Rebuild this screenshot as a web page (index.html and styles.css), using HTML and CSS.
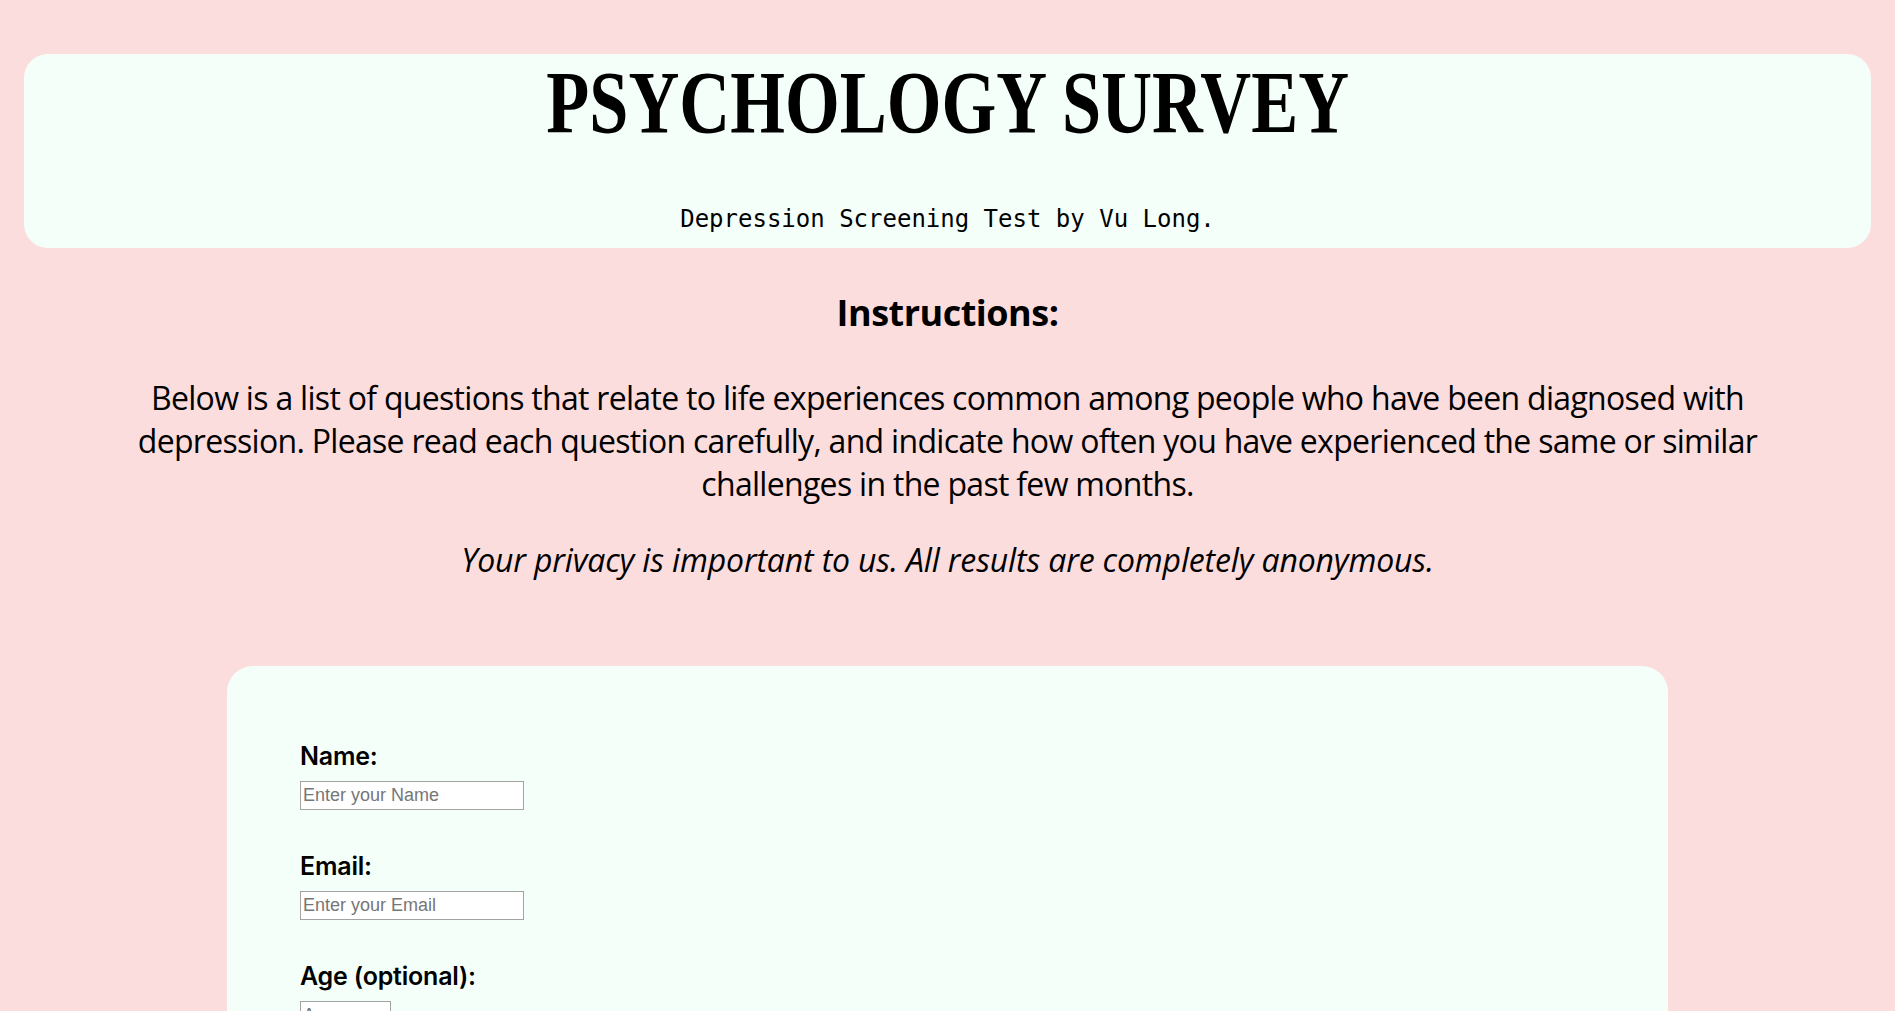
FILE: index.html
```html
<!DOCTYPE html>
<html lang="en">
<head>
<meta charset="utf-8">
<title>Psychology Survey</title>
<link rel="stylesheet" href="styles.css">
</head>
<body>
  <header class="hero">
    <h1 class="hero-title"><span class="hero-title-text">PSYCHOLOGY SURVEY</span></h1>
    <p class="hero-sub">Depression Screening Test by Vu Long.</p>
  </header>

  <section class="intro">
    <h2 class="intro-title">Instructions:</h2>
    <p class="intro-text">Below is a list of questions that relate to life experiences common among people who have been diagnosed with depression. Please read each question carefully, and indicate how often you have experienced the same or similar challenges in the past few months.</p>
    <p class="intro-note">Your privacy is important to us. All results are completely anonymous.</p>
  </section>

  <form class="survey">
    <div class="field">
      <label class="field-label" for="name">Name:</label>
      <input class="field-input" id="name" type="text" placeholder="Enter your Name">
    </div>
    <div class="field">
      <label class="field-label" for="email">Email:</label>
      <input class="field-input" id="email" type="email" placeholder="Enter your Email">
    </div>
    <div class="field">
      <label class="field-label" for="age">Age (optional):</label>
      <input class="field-input field-input-small" id="age" type="number" placeholder="Age">
    </div>
  </form>
</body>
</html>
```

FILE: styles.css
```css
* { box-sizing: border-box; }

body {
  margin: 0;
  padding: 54px 24px 40px;
  background: #fcdddd;
  color: #000;
  font-family: "Open Sans", "Noto Sans", sans-serif;
}

.hero {
  background: #f4fff9;
  border-radius: 24px;
  padding: 5px 20px 15px;
  text-align: center;
}

.hero-title {
  margin: 0;
  font-family: "Liberation Serif", serif;
  font-weight: 700;
  font-size: 88px;
  line-height: 88px;
}

.hero-title-text {
  display: inline-block;
  transform: scaleX(0.8);
}

.hero-sub {
  margin: 58px 0 0;
  font-family: "DejaVu Sans Mono", monospace;
  font-size: 24px;
  line-height: 28px;
}

.intro {
  text-align: center;
}

.intro-title {
  margin: 42px 0 0;
  font-size: 36px;
  line-height: 46px;
  font-weight: 700;
  letter-spacing: -0.5px;
}

.intro-text {
  max-width: 1650px;
  margin: 40px auto 0;
  font-size: 32px;
  line-height: 43px;
  letter-spacing: -0.7px;
}

.intro-note {
  margin: 33px 0 0;
  font-size: 32px;
  line-height: 43px;
  font-style: italic;
  letter-spacing: -0.15px;
}

.survey {
  width: 1441px;
  margin: 85px auto 0;
  background: #f4fff9;
  border-radius: 26px;
  padding: 75px 73px 60px;
  display: flex;
  flex-direction: column;
  gap: 41px;
}

.field {
  display: flex;
  flex-direction: column;
  align-items: flex-start;
}

.field-label {
  font-family: "Inter", sans-serif;
  font-weight: 600;
  font-size: 25px;
  line-height: 30px;
  margin-bottom: 10px;
  letter-spacing: -0.2px;
}

.field-input {
  width: 224px;
  height: 29px;
  border: 1px solid #a3a3a3;
  background: #fff;
  padding: 1px 2px;
  font-family: "Liberation Sans", Arial, sans-serif;
  font-size: 18px;
  border-radius: 0;
}

.field-input::placeholder {
  color: #767676;
}

.field-input-small {
  width: 91px;
}
```
